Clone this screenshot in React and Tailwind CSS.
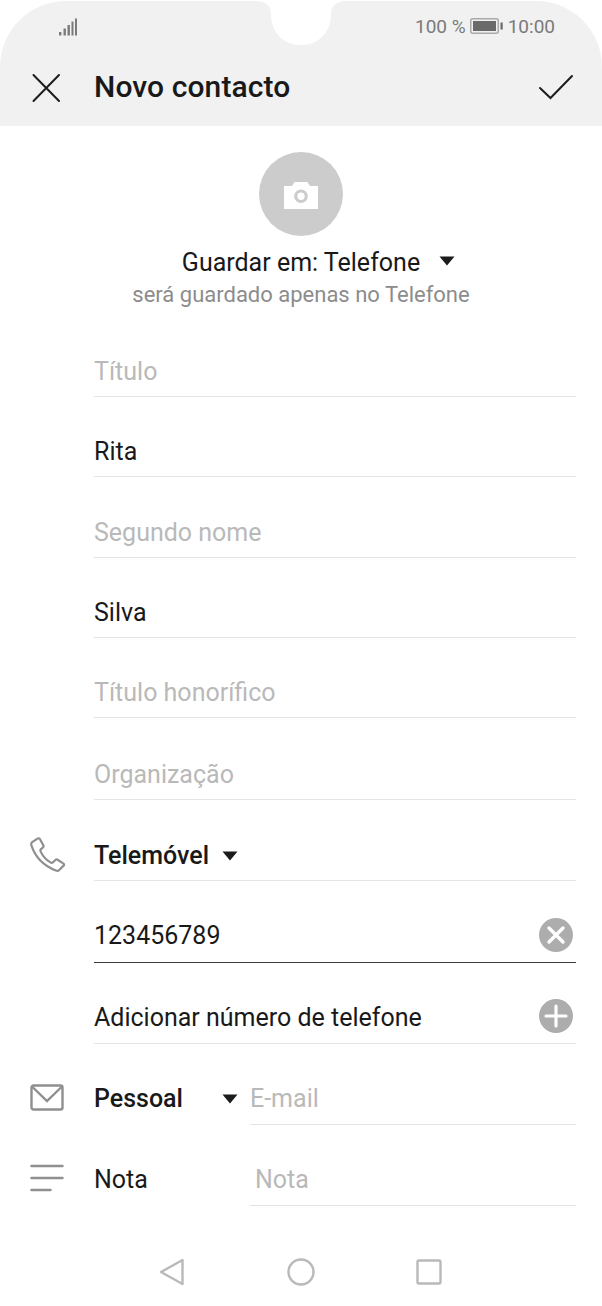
import React from 'react';

const Caret = ({ className = '' }) => (
  <svg width="16" height="10" viewBox="0 0 16 10" className={className}>
    <path d="M0.5 0.5h15L8 9.5z" fill="#1c1c1c" />
  </svg>
);

const PhoneIcon = () => (
  <svg width="36" height="36" viewBox="0 0 36 36" fill="none" stroke="#8f8f8f" strokeWidth="2.2" strokeLinejoin="round">
    <path d="M7.5 1.6 L2.2 5.2 C1.2 6 1 7.2 1.4 8.4 C5 19.5 13 28.5 26 33.6 C27.4 34.2 28.4 33.8 29.2 33 L33.6 28.6 C34.4 27.8 34.2 27 33.2 26.4 L27.6 22.8 C26.8 22.3 26 22.4 25.4 23 L23 25.2 C22.2 25.9 21.4 26 20.4 25.4 C15.5 22.6 12.6 19 10.6 14.4 C10.2 13.4 10.4 12.6 11.2 12 L12.8 10.6 C13.6 10 13.7 9.2 13.3 8.3 L10 2.2 C9.4 1.2 8.4 1 7.5 1.6 Z" />
  </svg>
);

const MailIcon = () => (
  <svg width="34" height="28" viewBox="0 0 34 28" fill="none" stroke="#8f8f8f" strokeWidth="2.4">
    <rect x="1.5" y="1.5" width="31" height="24" rx="2" />
    <path d="M2.5 3 L17 17 L31.5 3" />
  </svg>
);

const NoteIcon = () => (
  <svg width="34" height="28" viewBox="0 0 34 28" fill="none" stroke="#8f8f8f" strokeWidth="2.4" strokeLinecap="round">
    <path d="M1.5 2h31M1.5 14h31M1.5 26h19" />
  </svg>
);

const Row = ({ icon, iconPad = 'pb-[8px]', children, right, line = 'border-[#e4e4e4]', height = 'h-[80.4px]', pad = 'pb-[12px]' }) => (
  <div className={`flex ${height}`}>
    <div className={`w-[94px] shrink-0 pl-[30px] flex items-end ${iconPad}`}>{icon}</div>
    <div className={`flex-1 mr-[26px] flex items-end justify-between border-b ${pad} ${line}`}>
      {children}
      {right}
    </div>
  </div>
);

const Label = ({ children, muted }) => (
  <span className={`text-[25px] leading-none ${muted ? 'text-[#b9b9b9]' : 'text-[#191919]'}`}>{children}</span>
);

export default function App() {
  return (
    <div className="relative w-[602px] h-[1306px] overflow-hidden bg-white font-['Roboto',sans-serif]">
      {/* header */}
      <div className="h-[125px] mt-[1px] bg-[#f1f1f1] rounded-t-[66px] flex flex-col">
        <div className="h-[50px] pl-[58px] pr-[47px] flex items-center justify-between">
          <svg width="20" height="18" viewBox="0 0 20 18" fill="#7b7b7b" className="mt-[1px]">
            <rect x="1" y="14" width="2.4" height="3.5" />
            <rect x="5.5" y="10.5" width="2.4" height="7" />
            <rect x="9.5" y="7" width="2.4" height="10.5" />
            <rect x="13.5" y="3.5" width="2" height="14" />
            <rect x="17" y="0.5" width="2" height="17" />
          </svg>
          <div className="flex items-center text-[#7a7a7a] text-[19px] leading-none">
            <span>100 %</span>
            <svg width="33" height="18" viewBox="0 0 33 18" className="ml-[4px] mr-[5px]">
              <rect x="0.75" y="1.75" width="27.5" height="14.5" rx="2" fill="none" stroke="#a9a9a9" strokeWidth="1.5" />
              <rect x="3" y="4" width="23" height="10" fill="#6a6a6a" />
              <rect x="30.5" y="5.5" width="2.2" height="7" fill="#6a6a6a" />
            </svg>
            <span>10:00</span>
          </div>
        </div>
        <div className="flex items-center h-[74px]">
          <div className="w-[94px] pl-[31px] shrink-0">
            <svg width="30" height="30" viewBox="0 0 30 30" stroke="#1d1d1d" strokeWidth="2" fill="none" strokeLinecap="round">
              <path d="M2.5 2 L28 28 M28 2 L2.5 28" />
            </svg>
          </div>
          <div className="flex-1 text-[30px] leading-none font-medium text-[#191919] tracking-[0.1px] mb-[2px]">Novo contacto</div>
          <svg width="36" height="28" viewBox="0 0 36 28" stroke="#1d1d1d" strokeWidth="2" fill="none" strokeLinecap="round" className="mr-[28px]">
            <path d="M2 14 L12.5 24 L34 2" />
          </svg>
        </div>
      </div>

      {/* notch */}
      <svg width="88" height="46" viewBox="0 0 88 46" className="absolute left-[257px] top-0">
        <path d="M0 0 V1 C8 1 14 6 14 14 C14 32 26 45 44 45 C62 45 74 32 74 14 C74 6 80 1 88 1 V0 Z" fill="#ffffff" />
      </svg>

      {/* avatar */}
      <div className="flex flex-col items-center pt-[26px]">
        <div className="w-[84px] h-[84px] rounded-full bg-[#cccccc] flex items-center justify-center">
          <svg width="36" height="28" viewBox="0 0 36 28" className="mt-[1px]">
            <path fillRule="evenodd" fill="#ffffff" d="M1 5h8l2.5-4h13L27 5h8v23H1z M18 8.5a6.8 6.8 0 1 0 0 13.6a6.8 6.8 0 0 0 0-13.6z M18 11.6a3.7 3.7 0 1 1 0 7.4a3.7 3.7 0 0 1 0-7.4z" />
          </svg>
        </div>
        <div className="flex items-center mt-[14px] h-[24px] pl-[35px] text-[25px] leading-none text-[#191919]">
          <span>Guardar em: Telefone</span>
          <Caret className="ml-[19px] mb-[3px]" />
        </div>
        <div className="mt-[10px] text-[22px] leading-none text-[#8c8c8c]">será guardado apenas no Telefone</div>
      </div>

      {/* fields */}
      <div className="mt-[10.4px]">
        <Row><Label muted>Título</Label></Row>
        <Row><Label>Rita</Label></Row>
        <Row><Label muted>Segundo nome</Label></Row>
        <Row><Label>Silva</Label></Row>
        <Row><Label muted>Título honorífico</Label></Row>
        <Row height="h-[82px]"><Label muted>Organização</Label></Row>
        <Row icon={<PhoneIcon />} height="h-[81px]">
          <div className="flex items-center">
            <span className="text-[25px] leading-none font-medium text-[#191919]">Telemóvel</span>
            <Caret className="ml-[13px]" />
          </div>
        </Row>
        <Row
          line="border-[#3c3c3c]"
          height="h-[82px]"
          pad="pb-[14px]"
          right={
            <svg width="34" height="34" viewBox="0 0 34 34" className="mr-[3px] mb-[-4px]">
              <circle cx="17" cy="17" r="17" fill="#adadad" />
              <path d="M10 10 L24 24 M24 10 L10 24" stroke="#ffffff" strokeWidth="3.4" strokeLinecap="round" />
            </svg>
          }
        >
          <Label>123456789</Label>
        </Row>
        <Row
          height="h-[81px]"
          pad="pb-[13px]"
          right={
            <svg width="34" height="34" viewBox="0 0 34 34" className="mr-[3px] mb-[-3px]">
              <circle cx="17" cy="17" r="17" fill="#adadad" />
              <path d="M17 7 V27 M7 17 H27" stroke="#ffffff" strokeWidth="3.2" strokeLinecap="round" />
            </svg>
          }
        >
          <Label>Adicionar número de telefone</Label>
        </Row>

        {/* email */}
        <div className="flex h-[81px]">
          <div className="w-[94px] shrink-0 pl-[30px] flex items-end pb-[13px]"><MailIcon /></div>
          <div className="w-[156px] shrink-0 flex items-end justify-between pr-[12px] pb-[14px]">
            <span className="text-[25px] leading-none font-medium text-[#191919]">Pessoal</span>
            <Caret className="mb-[7px]" />
          </div>
          <div className="flex-1 mr-[26px] border-b border-[#e4e4e4] flex items-end pb-[13px]">
            <Label muted>E-mail</Label>
          </div>
        </div>

        {/* nota */}
        <div className="flex h-[81px]">
          <div className="w-[94px] shrink-0 pl-[30px] flex items-end pb-[14px]"><NoteIcon /></div>
          <div className="w-[156px] shrink-0 flex items-end pb-[14px]">
            <Label>Nota</Label>
          </div>
          <div className="flex-1 mr-[26px] pl-[5px] border-b border-[#e4e4e4] flex items-end pb-[13px]">
            <Label muted>Nota</Label>
          </div>
        </div>
      </div>

      {/* nav */}
      <div className="flex items-center mt-[52px] pl-[159px]">
        <svg width="26" height="28" viewBox="0 0 26 28" fill="none" stroke="#b9b9b9" strokeWidth="2.4" strokeLinejoin="round">
          <path d="M23.5 2 V26 L2 14 Z" />
        </svg>
        <svg width="28" height="28" viewBox="0 0 28 28" fill="none" stroke="#b9b9b9" strokeWidth="2.4" className="ml-[102px]">
          <circle cx="14" cy="14" r="12.5" />
        </svg>
        <svg width="26" height="26" viewBox="0 0 26 26" fill="none" stroke="#b9b9b9" strokeWidth="2.4" className="ml-[101px]">
          <rect x="1.5" y="1.5" width="23" height="23" rx="1.5" />
        </svg>
      </div>
    </div>
  );
}
